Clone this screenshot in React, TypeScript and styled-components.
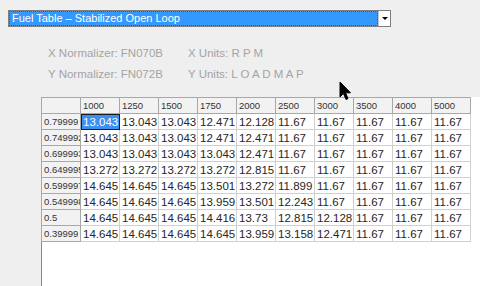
import React from "react";
import styled, { createGlobalStyle } from "styled-components";

const Global = createGlobalStyle`
  html, body { margin: 0; padding: 0; }
  body { background: #efefef; font-family: "Liberation Sans", Arial, sans-serif; }
`;

const Root = styled.div`
  position: relative;
  width: 480px;
  height: 286px;
  overflow: hidden;
  background: #efefef;
  display: flex;
  flex-direction: column;
`;

const Combo = styled.div`
  margin: 10px 0 0 8px;
  width: 383px;
  height: 17px;
  box-sizing: border-box;
  border: 1px solid #7f7f7f;
  display: flex;
  background: #fff;
`;

const ComboText = styled.div`
  flex: 1;
  background: #3399ff;
  color: #fff;
  font-size: 11px;
  padding-left: 2px;
  white-space: nowrap;
  border: 1px dotted #1a5fb0;
  box-sizing: border-box;
  height: 15px;
  line-height: 13px;
`;

const ComboButton = styled.div`
  width: 11px;
  display: flex;
  align-items: center;
  justify-content: center;
  background: #fff;
  border-left: 1px solid #c8c8c8;
`;

const Arrow = styled.div`
  width: 0;
  height: 0;
  border-left: 3px solid transparent;
  border-right: 3px solid transparent;
  border-top: 3px solid #000;
`;

const Info = styled.div`
  margin: 19px 0 0 48px;
  display: grid;
  grid-template-columns: 140px auto;
  row-gap: 7px;
  font-size: 11.5px;
  color: #a4a4a4;
  line-height: 14px;
`;

const Sheet = styled.div`
  margin: 16px 0 0 41px;
  flex: 1;
  background: #fff;
  border-left: 1px solid #8a8a8a;
`;

const Grid = styled.table`
  border-collapse: collapse;
  table-layout: fixed;
  margin-left: -1px;
`;

const Row = styled.tr`
  height: 16px;
`;

const HeadCell = styled.td`
  width: 39px;
  max-width: 39px;
  height: 16px;
  padding: 0 0 0 2px;
  box-sizing: border-box;
  background: #f2f2f2;
  border: 1px solid #a8a8a8;
  font-size: 9.5px;
  color: #333;
  white-space: nowrap;
  overflow: hidden;
  text-overflow: clip;
  vertical-align: middle;
`;

const DataCell = styled.td<{ $sel?: boolean }>`
  width: 39px;
  max-width: 39px;
  height: 16px;
  padding: 0 0 0 2px;
  box-sizing: border-box;
  border: 1px solid #d0d0d0;
  font-size: 11.5px;
  color: ${(p) => (p.$sel ? "#fff" : "#262626")};
  background: ${(p) => (p.$sel ? "#3d8ff0" : "#fff")};
  outline: ${(p) => (p.$sel ? "1px solid #1a1a1a" : "none")};
  outline-offset: -1px;
  white-space: nowrap;
  overflow: hidden;
  vertical-align: middle;
`;

const Cursor = styled.svg`
  position: absolute;
  left: 339px;
  top: 81px;
`;

const cols = ["1000", "1250", "1500", "1750", "2000", "2500", "3000", "3500", "4000", "5000"];
const rows: [string, string[]][] = [
  ["0.79999", ["13.043", "13.043", "13.043", "12.471", "12.128", "11.67", "11.67", "11.67", "11.67", "11.67"]],
  ["0.749992", ["13.043", "13.043", "13.043", "12.471", "12.471", "11.67", "11.67", "11.67", "11.67", "11.67"]],
  ["0.699993", ["13.043", "13.043", "13.043", "13.043", "12.471", "11.67", "11.67", "11.67", "11.67", "11.67"]],
  ["0.649995", ["13.272", "13.272", "13.272", "13.272", "12.815", "11.67", "11.67", "11.67", "11.67", "11.67"]],
  ["0.599997", ["14.645", "14.645", "14.645", "13.501", "13.272", "11.899", "11.67", "11.67", "11.67", "11.67"]],
  ["0.549998", ["14.645", "14.645", "14.645", "13.959", "13.501", "12.243", "11.67", "11.67", "11.67", "11.67"]],
  ["0.5", ["14.645", "14.645", "14.645", "14.416", "13.73", "12.815", "12.128", "11.67", "11.67", "11.67"]],
  ["0.39999", ["14.645", "14.645", "14.645", "14.645", "13.959", "13.158", "12.471", "11.67", "11.67", "11.67"]],
];

export default function App() {
  return (
    <Root>
      <Global />
      <Combo>
        <ComboText>Fuel Table – Stabilized Open Loop</ComboText>
        <ComboButton>
          <Arrow />
        </ComboButton>
      </Combo>
      <Info>
        <span>X Normalizer: FN070B</span>
        <span>X Units: R P M</span>
        <span>Y Normalizer: FN072B</span>
        <span>Y Units: L O A D M A P</span>
      </Info>
      <Sheet>
        <Grid>
          <tbody>
            <Row>
              <HeadCell />
              {cols.map((c) => (
                <HeadCell key={c}>{c}</HeadCell>
              ))}
            </Row>
            {rows.map(([h, vals], ri) => (
              <Row key={h}>
                <HeadCell>{h}</HeadCell>
                {vals.map((v, ci) => (
                  <DataCell key={ci} $sel={ri === 0 && ci === 0}>
                    {v}
                  </DataCell>
                ))}
              </Row>
            ))}
          </tbody>
        </Grid>
      </Sheet>
      <Cursor width="13" height="20" viewBox="0 0 13 20">
        <path d="M1 1 L1 16 L4.5 12.5 L7 18.5 L9 17.6 L6.6 11.8 L11.5 11.8 Z" fill="#000" stroke="#000" strokeWidth="1" strokeLinejoin="round" />
      </Cursor>
    </Root>
  );
}
